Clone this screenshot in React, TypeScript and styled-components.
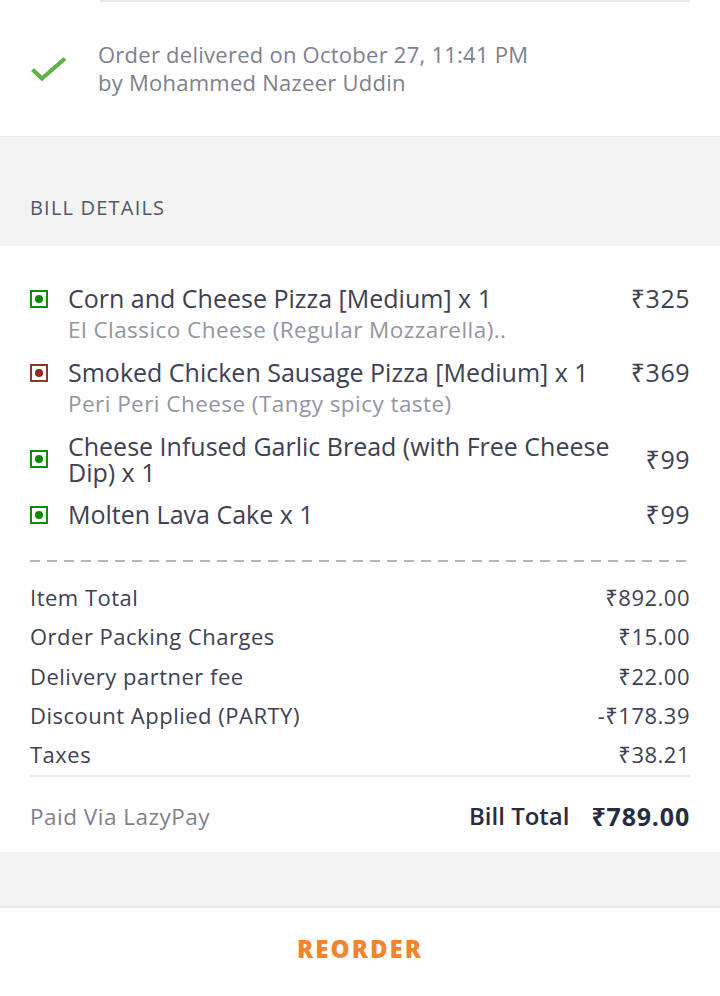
import styled, { createGlobalStyle } from 'styled-components'

type Item = {
  name: string;
  note?: string;
  price: string;
  veg: boolean;
}

const items: Item[] = [
  { name: 'Corn and Cheese Pizza [Medium] x 1', note: 'El Classico Cheese (Regular Mozzarella)..', price: '₹325', veg: true },
  { name: 'Smoked Chicken Sausage Pizza [Medium] x 1', note: 'Peri Peri Cheese (Tangy spicy taste)', price: '₹369', veg: false },
  { name: 'Cheese Infused Garlic Bread (with Free Cheese Dip) x 1', price: '₹99', veg: true },
  { name: 'Molten Lava Cake x 1', price: '₹99', veg: true },
]

const charges = [
  ['Item Total', '₹892.00'],
  ['Order Packing Charges', '₹15.00'],
  ['Delivery partner fee', '₹22.00'],
  ['Discount Applied (PARTY)', '-₹178.39'],
  ['Taxes', '₹38.21'],
]

const GlobalStyle = createGlobalStyle`
  body {
    margin: 0;
    background: #fff;
    font-family: "Open Sans", "Noto Sans", sans-serif;
    -webkit-font-smoothing: antialiased;
  }
`

const Page = styled.div`
  width: 720px;
  min-height: 996px;
  background: #fff;
`

const TopRule = styled.div`
  height: 2px;
  margin: 0 30px 0 100px;
  background: #e9e9eb;
`

const Delivered = styled.div`
  display: flex;
  align-items: center;
  height: 134px;
  padding: 0 30px;
  box-sizing: border-box;
`

const CheckWrap = styled.div`
  width: 68px;
  flex-shrink: 0;
  display: flex;
  align-items: center;
`

const DeliveredText = styled.div`
  font-size: 22px;
  line-height: 28px;
  letter-spacing: 0.25px;
  color: #7e808c;
  margin-top: -2px;
`

const SectionHead = styled.div`
  background: #f3f3f4;
  border-top: 1px solid #e9e9eb;
  height: 110px;
  box-sizing: border-box;
  padding: 0 30px 25px;
  display: flex;
  align-items: flex-end;
  font-size: 20px;
  letter-spacing: 1.2px;
  color: #535665;
`

const Bill = styled.div`
  background: #fff;
  padding: 39px 30px 16px;
`

const ItemList = styled.div`
  display: flex;
  flex-direction: column;
  gap: 16px;
`

const ItemRow = styled.div`
  display: grid;
  grid-template-columns: 38px 1fr auto;
  align-items: start;
`

const Mark = styled.span<{ $veg: boolean; $wrap?: boolean }>`
  display: flex;
  align-items: center;
  justify-content: center;
  width: 14px;
  height: 14px;
  margin-top: ${p => (p.$wrap ? '0' : '5px')};
  border: 2px solid ${p => (p.$veg ? '#138a0e' : '#8a3a22')};
  align-self: ${p => (p.$wrap ? 'center' : 'start')};

  &::after {
    content: '';
    width: 8px;
    height: 8px;
    border-radius: 50%;
    background: ${p => (p.$veg ? '#0f8a00' : '#8b3216')};
  }
`

const ItemText = styled.div`
  padding-right: 10px;
`

const ItemName = styled.div`
  font-size: 25px;
  line-height: 26px;
  color: #3d4152;
`

const ItemNote = styled.div`
  margin-top: 6px;
  font-size: 22.5px;
  line-height: 26px;
  letter-spacing: 0.45px;
  color: #93959f;
`

const Price = styled.div<{ $center?: boolean }>`
  font-size: 25px;
  line-height: 26px;
  letter-spacing: 0.5px;
  color: #3d4152;
  align-self: ${p => (p.$center ? 'center' : 'start')};
`

const Dashed = styled.div`
  height: 2px;
  margin: 33px 0 16px;
  background: repeating-linear-gradient(to right, #b5b6bc 0 10px, transparent 10px 17px);
`

const ChargeRow = styled.div`
  display: flex;
  justify-content: space-between;
  font-size: 22px;
  line-height: 39.25px;
  letter-spacing: 0.5px;
  color: #3d4152;
`

const Rule = styled.div`
  height: 2px;
  margin-top: 1px;
  background: #ededef;
`

const TotalRow = styled.div`
  display: flex;
  justify-content: space-between;
  align-items: center;
  height: 40px;
  margin-top: 19px;
`

const PaidVia = styled.div`
  font-size: 22.5px;
  letter-spacing: 0.5px;
  color: #7e808c;
`

const Total = styled.div`
  display: flex;
  gap: 22px;
  font-size: 24px;
  font-weight: 700;
  color: #282c3f;
`

const TotalLabel = styled.span`
  font-weight: 600;
`

const TotalValue = styled.span`
  font-size: 25px;
  letter-spacing: 0.8px;
`

const Band = styled.div`
  height: 54px;
  background: #f3f3f4;
  border-bottom: 2px solid #e9e9eb;
`

const Footer = styled.div`
  height: 88px;
  padding-bottom: 8px;
  box-sizing: border-box;
  display: flex;
  align-items: center;
  justify-content: center;
`

const Reorder = styled.button`
  border: none;
  background: none;
  font-family: "Open Sans", "Noto Sans", sans-serif;
  font-size: 24px;
  font-weight: 800;
  color: #f0852d;
  letter-spacing: 2px;
  padding: 0;
`

const Check = () => (
  <svg width="38" height="26" viewBox="0 0 38 26">
    <path d="M2.5 13.5 L12 22.5 L35 2.5" fill="none" stroke="#60b246" strokeWidth="4.2" />
  </svg>
)

export default function App() {
  return (
    <Page>
      <GlobalStyle />
      <TopRule />
      <Delivered>
        <CheckWrap>
          <Check />
        </CheckWrap>
        <DeliveredText>
          Order delivered on October 27, 11:41 PM
          <br />
          by Mohammed Nazeer Uddin
        </DeliveredText>
      </Delivered>
      <SectionHead>BILL DETAILS</SectionHead>
      <Bill>
        <ItemList>
          {items.map(item => {
            const wrap = !item.note && item.name.length > 40
            return (
              <ItemRow key={item.name}>
                <Mark $veg={item.veg} $wrap={wrap} />
                <ItemText>
                  <ItemName>{item.name}</ItemName>
                  {item.note && <ItemNote>{item.note}</ItemNote>}
                </ItemText>
                <Price $center={wrap}>{item.price}</Price>
              </ItemRow>
            )
          })}
        </ItemList>
        <Dashed />
        {charges.map(([label, value]) => (
          <ChargeRow key={label}>
            <span>{label}</span>
            <span>{value}</span>
          </ChargeRow>
        ))}
        <Rule />
        <TotalRow>
          <PaidVia>Paid Via LazyPay</PaidVia>
          <Total>
            <TotalLabel>Bill Total</TotalLabel>
            <TotalValue>₹789.00</TotalValue>
          </Total>
        </TotalRow>
      </Bill>
      <Band />
      <Footer>
        <Reorder>REORDER</Reorder>
      </Footer>
    </Page>
  )
}
